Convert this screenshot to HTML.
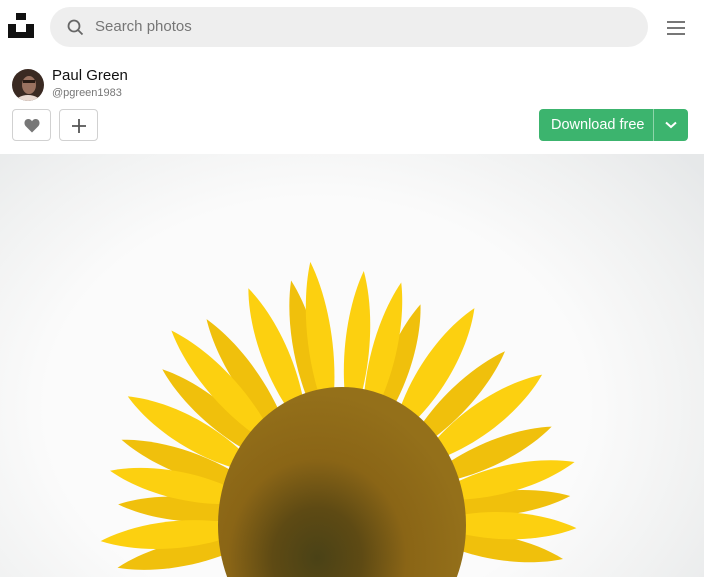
<!DOCTYPE html>
<html><head><meta charset="utf-8"><style>
*{margin:0;padding:0;box-sizing:border-box}
html,body{width:705px;height:577px;overflow:hidden}
body{background:#fff;font-family:"Liberation Sans",Arial,sans-serif;position:relative}
.logo{position:absolute;left:8px;top:13px}
.search{position:absolute;left:50px;top:7px;width:598px;height:40px;border-radius:20px;background:#eeeeee}
.search span{position:absolute;left:45px;top:11px;font-size:15px;color:#767676}
.menu{position:absolute;left:667px;top:21px;width:18px}
.menu i{display:block;height:2px;background:#777;margin-bottom:4px}
.avatar{position:absolute;left:12px;top:69px;width:32px;height:32px;border-radius:50%;overflow:hidden}
.name{position:absolute;left:52px;top:67px;font-size:15px;color:#111}
.user{position:absolute;left:52px;top:87px;font-size:11px;color:#767676}
.btn{position:absolute;top:109px;width:39px;height:32px;border:1px solid #d1d1d1;border-radius:4px;background:#fff}
.dl{position:absolute;left:539px;top:109px;width:149px;height:32px;border-radius:4px;background:#3cb46e;color:#fff;font-size:14.5px}
.dl span{position:absolute;left:12px;top:8px}
.dl .sep{position:absolute;left:114px;top:0;width:1px;height:32px;background:#8fd5aa}
.photo{position:absolute;left:0;top:154px;width:704px;height:423px;background:radial-gradient(ellipse 70% 90% at 45% 60%,#fbfbfb 55%,#f0f1f1 80%,#e6e8e9 100%);overflow:hidden}
</style></head><body>
<svg class="logo" width="26" height="26" viewBox="0 0 26 26"><rect x="8" y="0" width="10" height="7" fill="#111"/><path d="M0 11H8V19H18V11H26V25H0Z" fill="#111"/></svg>
<div class="search"><svg style="position:absolute;left:17px;top:12px" width="17" height="17" viewBox="0 0 17 17"><circle cx="7" cy="7" r="5.5" fill="none" stroke="#666" stroke-width="1.8"/><line x1="11" y1="11" x2="15.5" y2="15.5" stroke="#666" stroke-width="1.8"/></svg><span>Search photos</span></div>
<div class="menu"><i></i><i></i><i></i></div>
<div class="avatar"><svg width="32" height="32"><rect width="32" height="32" fill="#3a2a22"/><ellipse cx="17" cy="16" rx="7" ry="9" fill="#9a7260"/><rect x="11" y="11" width="12" height="3" fill="#2a1c15"/><ellipse cx="16" cy="34" rx="13" ry="8" fill="#e8d8d0"/></svg></div>
<div class="name">Paul Green</div>
<div class="user">@pgreen1983</div>
<div class="btn" style="left:12px"><svg style="position:absolute;left:11px;top:8px" width="16" height="15" viewBox="0 0 16 15"><path d="M8 14.5 L1.5 8 C-0.5 5.5 0.5 1 4.2 1 C6 1 7.3 2 8 3.3 C8.7 2 10 1 11.8 1 C15.5 1 16.5 5.5 14.5 8 Z" fill="#777"/></svg></div>
<div class="btn" style="left:59px"><svg style="position:absolute;left:12px;top:9px" width="14" height="14"><path d="M7 0V14M0 7H14" stroke="#555" stroke-width="1.8"/></svg></div>
<div class="dl"><span>Download free</span><div class="sep"></div><svg style="position:absolute;left:126px;top:12px" width="12" height="8" viewBox="0 0 12 8"><path d="M1 1.5 L6 6 L11 1.5" fill="none" stroke="#fff" stroke-width="2"/></svg></div>
<div class="photo">
<svg width="704" height="423" viewBox="0 154 704 423">
<defs>
<path id="p" d="M0,-95 C20,-150 16,-215 0,-255 C-16,-215 -20,-150 0,-95 Z"/>
<radialGradient id="d" cx="40%" cy="62%" r="60%"><stop offset="0" stop-color="#4a4216"/><stop offset="0.3" stop-color="#5e4a14"/><stop offset="0.6" stop-color="#8a6516"/><stop offset="1" stop-color="#94701a"/></radialGradient>
</defs>
<g transform="translate(342,520)" fill="#f0c00c">
<use href="#p" transform="rotate(-102) scale(0.9,0.9)"/><use href="#p" transform="rotate(-86) scale(0.9,0.88)"/><use href="#p" transform="rotate(-70) scale(0.9,0.92)"/><use href="#p" transform="rotate(-50) scale(0.9,0.92)"/><use href="#p" transform="rotate(-34) scale(0.9,0.95)"/><use href="#p" transform="rotate(-12) scale(0.9,0.96)"/><use href="#p" transform="rotate(20) scale(0.9,0.9)"/><use href="#p" transform="rotate(44) scale(0.9,0.92)"/><use href="#p" transform="rotate(66) scale(0.9,0.9)"/><use href="#p" transform="rotate(84) scale(0.9,0.9)"/><use href="#p" transform="rotate(100) scale(0.9,0.88)"/>
</g>
<g transform="translate(342,520)" fill="#fcd010">
<use href="#p" transform="rotate(-95) scale(1,0.95)"/><use href="#p" transform="rotate(-78) scale(1,0.93)"/><use href="#p" transform="rotate(-60) scale(1.1,0.97)"/><use href="#p" transform="rotate(-42) scale(1,1.0)"/><use href="#p" transform="rotate(-22) scale(1,0.98)"/><use href="#p" transform="rotate(-7) scale(0.9,1.02)"/><use href="#p" transform="rotate(5) scale(0.9,0.98)"/><use href="#p" transform="rotate(14) scale(0.9,0.96)"/><use href="#p" transform="rotate(32) scale(1.1,0.98)"/><use href="#p" transform="rotate(54) scale(1.1,0.97)"/><use href="#p" transform="rotate(76) scale(1,0.94)"/><use href="#p" transform="rotate(92) scale(1,0.92)"/>
</g>
<ellipse cx="342" cy="525" rx="124" ry="138" fill="url(#d)"/>
</svg>
</div>
</body></html>
